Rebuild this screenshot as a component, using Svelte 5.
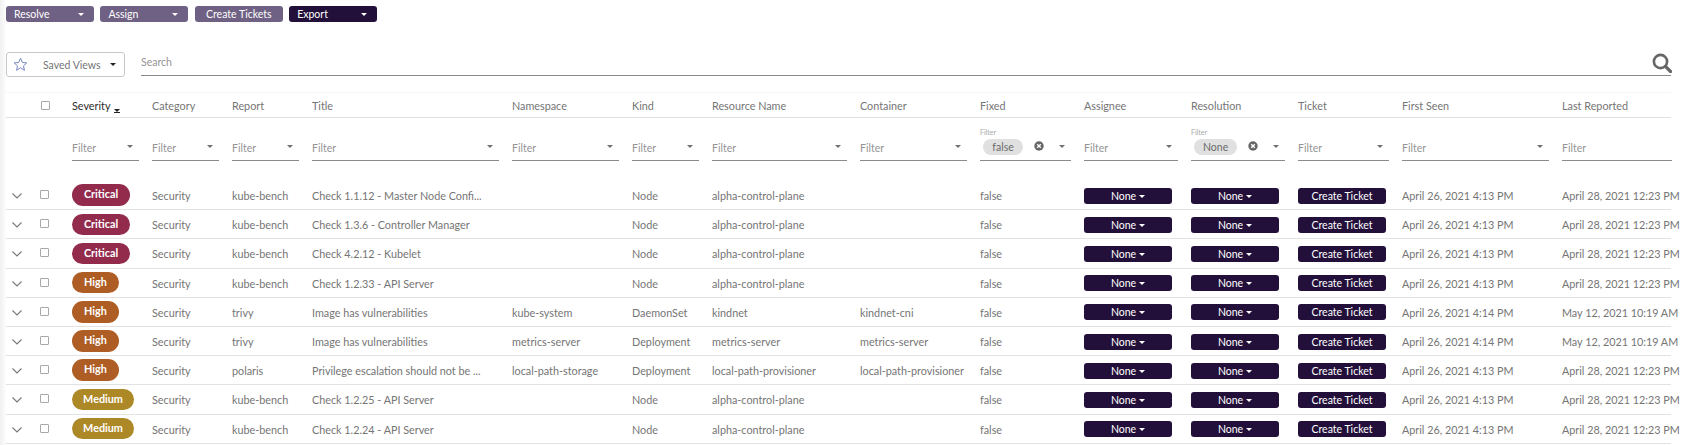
<script>
  const cols = ['Severity','Category','Report','Title','Namespace','Kind','Resource Name','Container','Fixed','Assignee','Resolution','Ticket','First Seen','Last Reported'];
  const chips = { Fixed: 'false', Resolution: 'None' };
  const F1 = 'April 26, 2021 4:13 PM', F2 = 'April 26, 2021 4:14 PM';
  const L1 = 'April 28, 2021 12:23 PM', L2 = 'May 12, 2021 10:19 AM';
  const acp = 'alpha-control-plane';
  const rows = [
    ['Critical','kube-bench','Check 1.1.12 - Master Node Confi...','','Node',acp,'',F1,L1],
    ['Critical','kube-bench','Check 1.3.6 - Controller Manager','','Node',acp,'',F1,L1],
    ['Critical','kube-bench','Check 4.2.12 - Kubelet','','Node',acp,'',F1,L1],
    ['High','kube-bench','Check 1.2.33 - API Server','','Node',acp,'',F1,L1],
    ['High','trivy','Image has vulnerabilities','kube-system','DaemonSet','kindnet','kindnet-cni',F2,L2],
    ['High','trivy','Image has vulnerabilities','metrics-server','Deployment','metrics-server','metrics-server',F2,L2],
    ['High','polaris','Privilege escalation should not be ...','local-path-storage','Deployment','local-path-provisioner','local-path-provisioner',F1,L1],
    ['Medium','kube-bench','Check 1.2.25 - API Server','','Node',acp,'',F1,L1],
    ['Medium','kube-bench','Check 1.2.24 - API Server','','Node',acp,'',F1,L1]
  ];
</script>

<div class="page">
  <div class="actions">
    <button class="btn muted"><span>Resolve</span><i class="caret"></i></button>
    <button class="btn muted"><span>Assign</span><i class="caret"></i></button>
    <button class="btn muted center">Create Tickets</button>
    <button class="btn dark"><span>Export</span><i class="caret"></i></button>
  </div>

  <div class="toolbar">
    <div class="views">
      <svg class="star" viewBox="0 0 16 16" width="15" height="15"><path d="M8 1.400l2 4.400 4.700.5-3.500 3.200 1 4.700L8 11.400l-4.200 2.800 1-4.700L1.300 6.300 6 5.800z" fill="none" stroke="#6f7fc0" stroke-width="1"/></svg>
      <span class="views-label">Saved Views</span>
      <i class="caret ink"></i>
    </div>
    <div class="search">
      <span>Search</span>
      <svg viewBox="0 0 20 20" width="20" height="20"><circle cx="8.500" cy="8.500" r="6.600" fill="none" stroke="#666" stroke-width="2.600"/><path d="M13.400 13.400L18.500 18.500" stroke="#666" stroke-width="3.200" stroke-linecap="round"/></svg>
    </div>
  </div>

  <div class="table">
    <div class="grid head">
      <div class="lead"><span class="chevron-space"></span><span class="check"></span></div>
      {#each cols as c, i}
        <div class:active={i === 0}>{c}{#if i === 0}<i class="sort"></i>{/if}</div>
      {/each}
    </div>
    <div class="grid filters">
      <div></div>
      {#each cols as c}
        <div class="filter">
          {#if chips[c]}
            <small>Filter</small>
            <span class="chip">{chips[c]}</span>
            <svg class="clear" viewBox="0 0 10 10" width="10" height="10"><circle cx="5" cy="5" r="4.700" fill="#666"/><path d="M3.200 3.200l3.600 3.600M6.800 3.200l-3.600 3.600" stroke="#fff" stroke-width="1.400"/></svg>
          {:else}
            <span class="ph">Filter</span>
          {/if}
          {#if c !== 'Last Reported'}<i class="arrow"></i>{/if}
        </div>
      {/each}
    </div>
    {#each rows as r}
      <div class="grid row">
        <div class="lead">
          <svg class="chev" viewBox="0 0 12 8" width="12" height="8"><path d="M1.500 1.500L6 6l4.500-4.500" fill="none" stroke="#777" stroke-width="1.100"/></svg>
          <span class="check up"></span>
        </div>
        <div><span class="pill {r[0].toLowerCase()}">{r[0]}</span></div>
        <div class="cell">Security</div>
        <div class="cell">{r[1]}</div>
        <div class="cell">{r[2]}</div>
        <div class="cell">{r[3]}</div>
        <div class="cell">{r[4]}</div>
        <div class="cell">{r[5]}</div>
        <div class="cell">{r[6]}</div>
        <div class="cell">false</div>
        <div><button class="rowbtn">None<i class="caret small"></i></button></div>
        <div><button class="rowbtn">None<i class="caret small"></i></button></div>
        <div><button class="rowbtn">Create Ticket</button></div>
        <div class="cell">{r[7]}</div>
        <div class="cell">{r[8]}</div>
      </div>
    {/each}
  </div>
</div>

<style>
  :global(body) { margin: 0; background: #fff; }
  .page {
    height: 445px; overflow: hidden; box-sizing: border-box; padding: 6px 14px 0 6px;
    font: 10.800px Lato, sans-serif; color: #757575;
    background: linear-gradient(90deg, #f1f1f1, #fafafa 5px, #fff 6px);
  }
  .actions { display: flex; gap: 6.400px; height: 16px; }
  .btn {
    width: 88px; height: 16px; border: 0; border-radius: 3px; padding: 0 10px 0 8px;
    display: flex; align-items: center; justify-content: space-between;
    color: #fff; font: inherit; font-size: 10.500px;
  }
  .btn.center { justify-content: center; padding: 0; }
  .muted { background: #6f6184; }
  .dark { background: #23103a; }
  .caret { display: inline-block; width: 0; height: 0; border: 3px solid transparent; border-top-color: #fff; border-bottom: 0; }
  .caret.ink { border-top-color: #222; }
  .caret.small { margin-left: 3px; vertical-align: 2px; }
  .toolbar { display: flex; margin-top: 30px; height: 25px; align-items: stretch; }
  .views {
    width: 118.500px; box-sizing: border-box; border: 1px solid #c8c8c8; border-radius: 3px; flex: none;
    display: flex; align-items: center; padding: 0 8px 0 6px;
  }
  .views-label { margin-left: 15px; flex: 1; font-size: 10.500px; }
  .search {
    flex: 1; margin-left: 16.500px; height: 23.500px; box-sizing: border-box; border-bottom: 1px solid #8a8a8a;
    display: flex; justify-content: space-between; font-size: 10.500px; color: #949494; padding-top: 4px; line-height: 13px; position: relative;
  }
  .search svg { position: absolute; right: -1px; top: 1px; }
  .table { margin-top: 15px; border-top: 1px solid #f6f6f6; }
  .grid {
    display: grid; column-gap: 13px; align-items: center;
    grid-template-columns: 53px 67px 67px 67px 187px 107px 67px 135px 107px 91px 94px 94px 91px 147px 110px;
  }
  .head { height: 25px; box-sizing: border-box; border-bottom: 1px solid #e2e2e2; }
  .active { color: #2c2c2c; }
  .sort { display: inline-block; width: 0; height: 0; margin-left: 3px; border: 3px solid transparent; border-top-color: #222; border-bottom: 0; box-shadow: 0 1px 0 #222; vertical-align: -2px; }
  .lead { display: flex; align-items: center; padding-left: 5px; }
  .chevron-space, .chev { width: 12px; flex: none; }
  .chev { margin-top: 2px; }
  .check { width: 7px; height: 7px; margin-left: 17px; border: 1px solid #a8a8a8; border-radius: 1px; flex: none; box-sizing: content-box; background: #fff; }
  .head .check { margin-left: 18px; }
  .up { margin-top: -1px; }
  .filters { height: 63px; align-items: start; }
  .filter {
    position: relative; height: 24px; margin-top: 19px; box-sizing: border-box; border-bottom: 1px solid #8a8a8a;
    display: flex; align-items: center; color: #949494; font-size: 10.500px;
  }
  .ph { flex: 1; padding-bottom: 2px; }
  .arrow { position: absolute; right: 6px; top: 8px; width: 0; height: 0; border: 3px solid transparent; border-top: 3px solid #707070; border-bottom: 0; }
  small { position: absolute; left: 0; top: -9px; font-size: 7px; color: #a8a8a8; }
  .chip { margin-left: 3px; padding: 0 9px; height: 16px; line-height: 16px; border-radius: 8px; background: #e0e0e0; color: #6a6a6a; margin-bottom: 4px; min-width: 22px; text-align: center; }
  .clear { margin-left: 11px; margin-bottom: 5px; }
  .row { height: 29.200px; box-sizing: border-box; border-bottom: 1px solid #e2e2e2; white-space: nowrap; }
  .cell { padding-top: 1px; }
  .pill { display: block; box-sizing: border-box; height: 21.500px; line-height: 20.500px; text-align: center; border-radius: 11px; color: #fff; font-weight: 700; font-size: 10.800px; }
  .critical { background: #932b4d; width: 58px; }
  .high { background: #ae5d24; width: 47px; }
  .medium { background: #ad8826; width: 62px; }
  .rowbtn { display: block; width: 88px; height: 16px; margin-top: 1px; padding: 0; border: 0; border-radius: 3px; background: #23103a; color: #fff; font: inherit; font-size: 10.500px; text-align: center; }
</style>
